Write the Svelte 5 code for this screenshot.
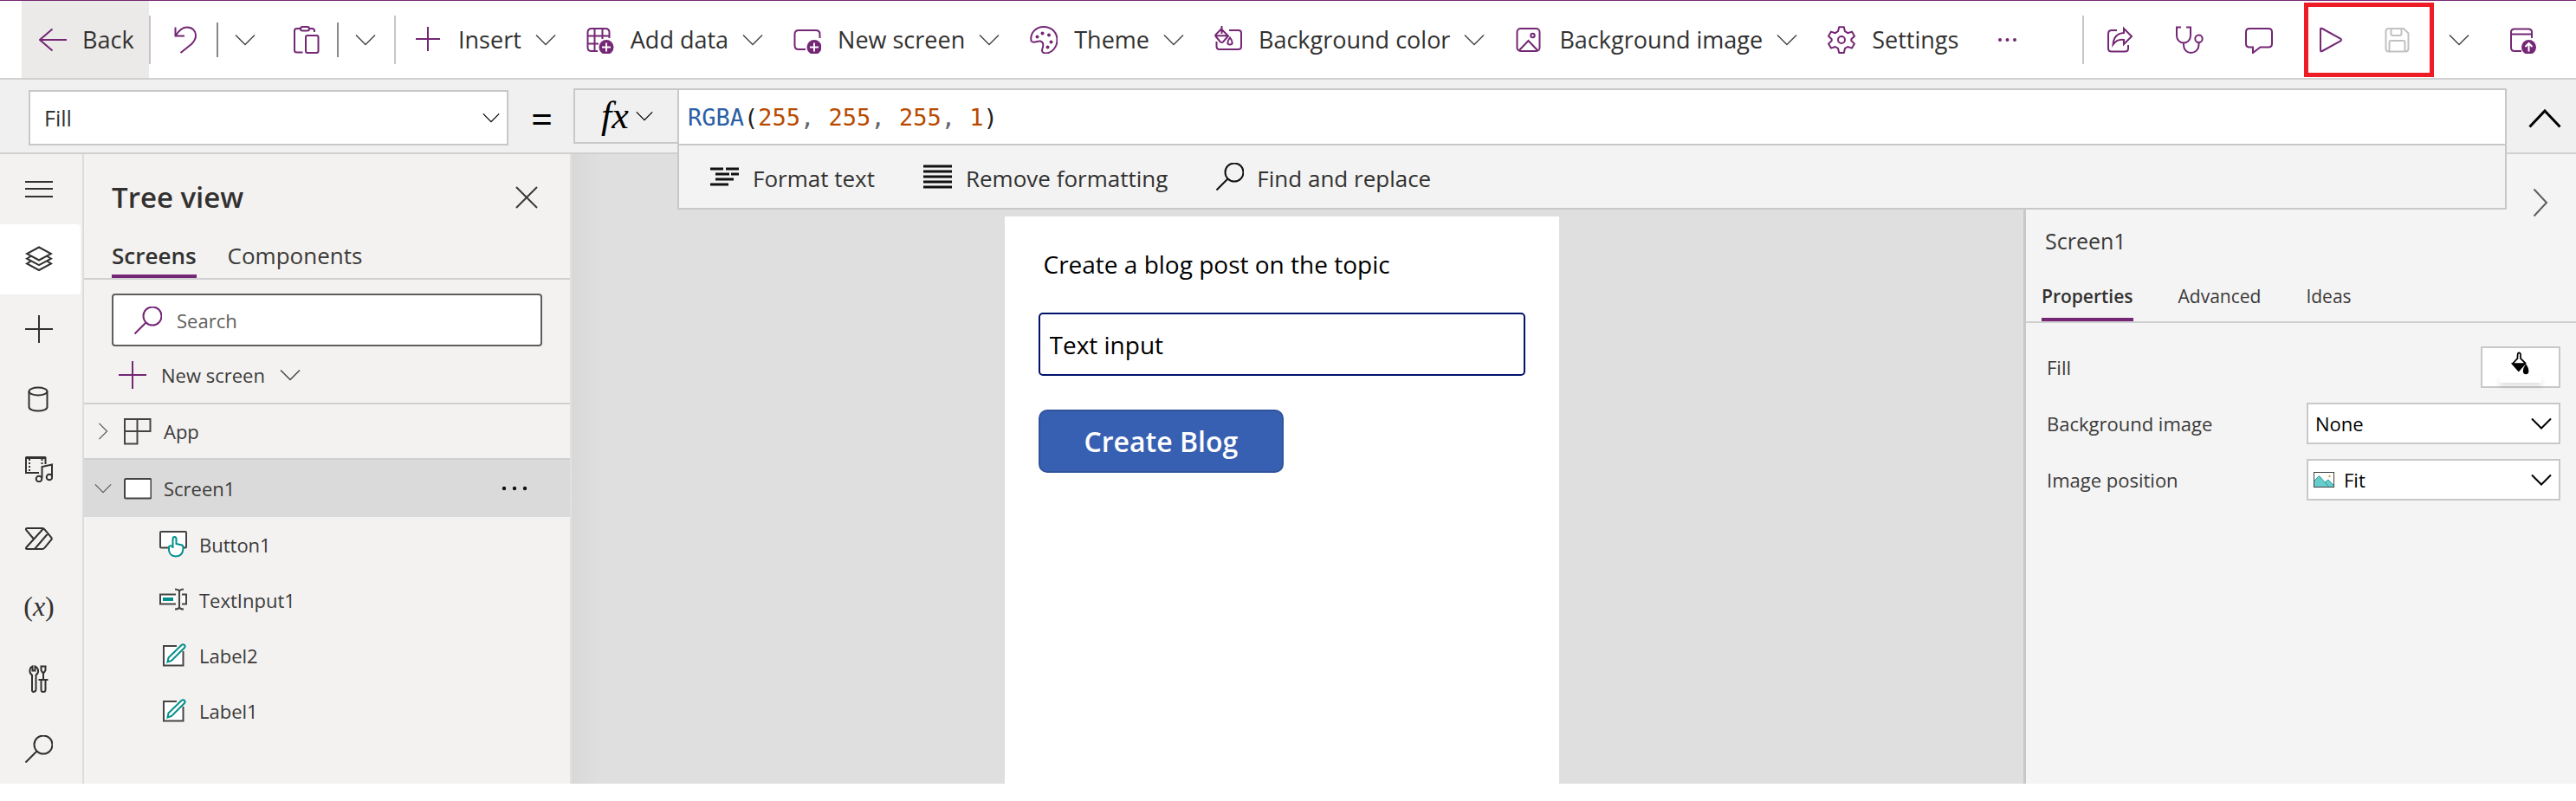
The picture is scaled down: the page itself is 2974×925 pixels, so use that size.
<script>
  const commands = [
    { icon: 'plus', label: 'Insert' },
    { icon: 'grid', label: 'Add data' },
    { icon: 'screen', label: 'New screen' },
    { icon: 'palette', label: 'Theme' },
    { icon: 'bucket', label: 'Background color' },
    { icon: 'image', label: 'Background image' }
  ];

  const rail = [
    { icon: 'menu', label: 'Menu' },
    { icon: 'layers', label: 'Tree view', active: true },
    { icon: 'railPlus', label: 'Insert' },
    { icon: 'data', label: 'Data' },
    { icon: 'media', label: 'Media' },
    { icon: 'flow', label: 'Power Automate' },
    { icon: 'variables', label: 'Variables' },
    { icon: 'tools', label: 'Advanced tools' },
    { icon: 'search', label: 'Search' }
  ];

  const children = [
    { icon: 'button', label: 'Button1' },
    { icon: 'textinput', label: 'TextInput1' },
    { icon: 'label', label: 'Label2' },
    { icon: 'label', label: 'Label1' }
  ];

  let property = $state('Fill');
  let backgroundImage = $state('None');
  let imagePosition = $state('Fit');
  let textValue = $state('Text input');
  let query = $state('');
</script>

{#snippet chevron()}
  <svg class="chev" width="24" height="14" viewBox="0 0 24 14" aria-hidden="true"><path d="M1 1.5L12 12.5L23 1.5" /></svg>
{/snippet}

{#snippet icon(name)}
  <svg class="icon" width="32" height="32" viewBox="0 0 32 32" aria-hidden="true">
    {#if name === 'back'}
      <path d="M32 16H1M15.500 3.500L1 16L15.500 28.500" />
    {:else if name === 'undo'}
      <path d="M3.500 1.500V11.500H14M4 11C7 6 11 1.500 17 1.500C23.500 1.500 27 6 27 11C27 15 25 18 22 21L9.500 31" />
    {:else if name === 'paste'}
      <path d="M11.500 30.500H4.500Q2 30.500 2 28V5.500Q2 3 4.500 3H9M19 3H22.500Q25 3 25 5.500V7" />
      <rect x="9" y="1" width="10" height="4.500" rx="2.200" />
      <rect x="15" y="11" width="14.500" height="20" rx="2" />
    {:else if name === 'plus'}
      <path d="M2 15H30M16 1V29" />
    {:else if name === 'grid'}
      <path d="M13 29H6Q1.500 29 1.500 25V7.500Q1.500 3 6 3H22Q26.500 3 26.500 7.500V14M1.500 11.500H26.500M1.500 20.500H14M9.500 3V29M18.500 3V15" />
      <circle class="solid" cx="23" cy="24.500" r="8.500" />
      <path class="white" d="M23 19.500V29.500M18 24.500H28" />
    {:else if name === 'screen'}
      <path d="M14 27H6Q1.500 27 1.500 22.500V9.500Q1.500 5 6 5H26Q30.500 5 30.500 9.500V14" />
      <circle class="solid" cx="24" cy="24.500" r="8.500" />
      <path class="white" d="M24 19.500V29.500M19 24.500H29" />
    {:else if name === 'palette'}
      <path d="M1.500 17C0 8 7 1 16 1C25 1 31.500 7.500 31.500 16C31.500 25 25 31.500 18 31.500C14 31.500 13.500 28.500 14.500 26C16 22 15.500 18 12 17.500C8 17 3 21 1.500 17Z" />
      <circle class="solid" cx="8.500" cy="12.500" r="2" /><circle class="solid" cx="14.500" cy="8.500" r="2" />
      <circle class="solid" cx="22" cy="10.500" r="2" /><circle class="solid" cx="24.500" cy="18.500" r="2" />
      <circle class="solid" cx="20.500" cy="24.500" r="2" />
    {:else if name === 'bucket'}
      <path d="M17 5H28Q31 5 31 8V23.500Q31 27 27.500 27H6Q2.500 27 2.500 23.500V18" />
      <path d="M8 3.500L16 11.500L10 18.500Q8.500 19.500 7 18.500L1.500 12Q1 11 1.500 10ZM1.500 11.200H15.500M8.500 0V9" />
      <path d="M18 13.500C14.500 18 14.500 21.500 18 21.500C21.500 21.500 21.500 18 18 13.500Z" />
    {:else if name === 'image'}
      <rect x="2.500" y="3" width="26" height="26" rx="4" />
      <path d="M5 28L15.500 17L26 28" />
      <circle cx="20.500" cy="11" r="2.200" />
    {:else if name === 'gear'}
      <path d="M13.200 1.200H18.800L20 6.200L23.200 8.200L28 6.600L31 11.700L27.300 15.300V17L31 20.600L28 25.600L23.200 24L20 25.900L18.800 31H13.200L12 25.900L8.800 24L4 25.600L1 20.600L4.700 17V15.300L1 11.700L4 6.600L8.800 8.200L12 6.200Z" stroke-linejoin="round" />
      <circle cx="16" cy="16" r="4" />
    {:else if name === 'dots'}
      <circle class="solid" cx="7" cy="16" r="2" /><circle class="solid" cx="15.500" cy="16" r="2" /><circle class="solid" cx="24" cy="16" r="2" />
    {:else if name === 'share'}
      <path d="M12 5H6Q2 5 2 9V26Q2 29.500 6 29.500H21Q25 29.500 25 26V22" />
      <path d="M20 3L29 12L20 21V16C14 15 10 18 7.500 21.500C8 14 12 8.500 20 8Z" />
    {:else if name === 'stetho'}
      <path d="M6 1.500H1V11C1 16 4.500 19.500 9 19.500C13.500 19.500 17 16 17 11V1.500H12M9 19.500V22C9 27 12.500 31 17.500 31C22.500 31 26.500 27 26.500 22V19" />
      <circle cx="26.500" cy="14.800" r="4.200" />
    {:else if name === 'comment'}
      <path d="M5 3H27Q31 3 31 7V20.500Q31 24.500 27 24.500H17.500L9 31V24.500H5Q1 24.500 1 20.500V7Q1 3 5 3Z" />
    {:else if name === 'play'}
      <path d="M7 4V28Q7 30 9 29L30 17.500Q32 16 30 14.500L9 3Q7 2 7 4Z" />
    {:else if name === 'save'}
      <path d="M5 3H23L28.500 8.500V26Q28.500 29.500 25 29.500H6Q2.500 29.500 2.500 26V6Q2.500 3 5.500 3ZM8.500 3V9Q8.500 11 10.500 11H18.500Q20.500 11 20.500 9V3M6.500 29.500V19Q6.500 17 8.500 17H22.500Q24.500 17 24.500 19V29.500" />
    {:else if name === 'publish'}
      <path d="M14 29H6Q2 29 2 25V7Q2 3.500 6 3.500H22Q26 3.500 26 7V14M2 9.500H26" />
      <circle class="solid" cx="22.500" cy="24.500" r="8.500" />
      <path class="white" d="M22.500 29.500V20M18.500 24L22.500 20L26.500 24" />
    {:else if name === 'menu'}
      <path d="M0 8H32M0 16H32M0 25H32" />
    {:else if name === 'layers'}
      <path d="M16 2.500L30 10L16 17.500L2 10ZM6.500 13L2 15.700L16 23.200L30 15.700L25.500 13M6.500 18.700L2 21.500L16 29L30 21.500L25.500 18.700" />
    {:else if name === 'railPlus'}
      <path d="M0 16H32M16 0V32" />
    {:else if name === 'data'}
      <ellipse cx="15" cy="7" rx="10.500" ry="4.500" />
      <path d="M4.500 7V25C4.500 31 25.500 31 25.500 25V7" />
    {:else if name === 'media'}
      <path d="M16 21H1V3.500H23.500V11" />
      <path d="M1 3.500H23.500" stroke-width="3" />
      <path d="M5 5V20M19.500 5V13" stroke-dasharray="2 2" />
      <path d="M19.500 27V14L31 11.500V26" />
      <circle cx="16" cy="28" r="3.300" /><circle cx="28" cy="26" r="3.300" />
    {:else if name === 'flow'}
      <path d="M2 4H20Q21.500 4 22.500 5.500L30.500 15Q31 16 30.500 17L22.500 26.500Q21.500 28 20 28H2.500Q0 28 1.500 26L21 4.500M2 4Q0 4.500 1.500 6.500L10 16.500M11 28L26 10.500" />
    {:else if name === 'tools'}
      <path d="M9 31Q12.500 31 12.500 28V11.500Q15.500 9.500 15 5.500Q14 2.500 11.500 1.500V6.500H8.500V1.500Q6 2.500 5.500 5.500Q5 9.500 8 11.500V28Q7.500 31 10 31ZM18.500 1.500H23.500V6L22 8.500H20L18.500 6ZM21 8.500V17M15.500 17H26.500M18.500 17V28.500Q18.500 31 21 31Q23.500 31 23.500 28.500V17" />
    {:else if name === 'search'}
      <circle cx="21" cy="11" r="10.500" /><path d="M13.500 18.500L0.500 31.500" />
    {:else if name === 'close'}
      <path d="M4 4L28 28M28 4L4 28" />
    {:else if name === 'app'}
      <path d="M1 2H30.500V16H1ZM15.500 2V30.500H1V16" />
    {:else if name === 'frame'}
      <rect class="paper" x="1" y="5" width="30.500" height="22.500" rx="1.500" />
    {:else if name === 'button'}
      <rect class="paper" x="1" y="1" width="30" height="18.500" rx="1" />
      <path class="teal paper" d="M15.500 18V9.500Q15.500 7 17.500 7Q19.500 7 19.500 9.500V15L26 16.500Q28 17.500 27.500 20Q27 29.500 19 29.500Q11.500 29 11 22V18.500Q11.500 16.500 15.500 18V20" />
    {:else if name === 'textinput'}
      <path class="paper" d="M19 9.500H1V20.500H19M26 9.500H31V20.500H26" />
      <rect class="tealfill" x="4" y="13" width="12" height="4" />
      <path d="M18 3.500Q22 3.500 23 5.500Q24 3.500 28 3.500M23 5V25M18 26.500Q22 26.500 23 24.500Q24 26.500 28 26.500" />
    {:else if name === 'label'}
      <path class="paper" d="M20 5H5V27.500H27.500V11" />
      <path class="teal paper" d="M9.500 23.500L10.500 18.500L25.500 4Q27.500 2.500 29 4Q30.500 5.500 28.500 7.500L14 22Z" />
    {/if}
  </svg>
{/snippet}

<div class="studio">
  <header class="commandbar">
    <button class="back">{@render icon('back')}<span>Back</span></button>
    <span class="rule tall"></span>
    <div class="history">
      <button aria-label="Undo">{@render icon('undo')}</button>
      <span class="rule dark"></span>
      <button aria-label="Undo options">{@render chevron()}</button>
    </div>
    <div class="history clip">
      <button aria-label="Paste">{@render icon('paste')}</button>
      <span class="rule dark"></span>
      <button aria-label="Paste options">{@render chevron()}</button>
    </div>
    <span class="rule tall"></span>
    <nav class="commands" aria-label="Commands">
      {#each commands as c}
        <button class="command">{@render icon(c.icon)}<span>{c.label}</span>{@render chevron()}</button>
      {/each}
      <button class="command last">{@render icon('gear')}<span>Settings</span></button>
      <button aria-label="More commands">{@render icon('dots')}</button>
    </nav>
    <div class="actions">
      <span class="rule tall"></span>
      <button aria-label="Share">{@render icon('share')}</button>
      <button aria-label="App checker">{@render icon('stetho')}</button>
      <button aria-label="Comments">{@render icon('comment')}</button>
      <div class="marked">
        <button aria-label="Preview the app">{@render icon('play')}</button>
        <button class="off" aria-label="Save" disabled>{@render icon('save')}</button>
      </div>
      <button class="saveopts" aria-label="Save options">{@render chevron()}</button>
      <button aria-label="Publish">{@render icon('publish')}</button>
    </div>
  </header>

  <section class="formulabar" aria-label="Formula bar">
    <div class="pick property">
      <select bind:value={property} aria-label="Property"><option>Fill</option></select>
      {@render chevron()}
    </div>
    <span class="equals">=</span>
    <button class="fx" aria-label="Functions"><span>fx</span>{@render chevron()}</button>
    <div class="editor">
      <div class="code" role="textbox" tabindex="0" contenteditable="true" aria-label="Formula"><span class="fn">RGBA</span>(<b>255</b><i>,</i> <b>255</b><i>,</i> <b>255</b><i>,</i> <b>1</b>)</div>
      <div class="formatting">
        <button>
          <svg width="34" height="24" viewBox="0 0 34 24" aria-hidden="true"><path d="M0 3H15M18 3H33M6 9H22M24 9H33M6 15H27M0 21H21" /></svg>
          <span>Format text</span>
        </button>
        <button>
          <svg width="34" height="30" viewBox="0 0 34 30" aria-hidden="true"><path d="M0 3H33M0 9H33M0 15H33M0 21H33M0 27H33" /></svg>
          <span>Remove formatting</span>
        </button>
        <button>{@render icon('search')}<span>Find and replace</span></button>
      </div>
    </div>
    <button class="collapse" aria-label="Collapse formula bar">
      <svg width="38" height="22" viewBox="0 0 38 22" aria-hidden="true"><path d="M1.500 20.500L19 2L36.500 20.500" /></svg>
    </button>
  </section>

  <main class="workspace">
    <nav class="rail" aria-label="Authoring">
      {#each rail as r}
        <button class:active={r.active} aria-label={r.label}>
          {#if r.icon === 'variables'}<span class="vars">(<em>x</em>)</span>{:else}{@render icon(r.icon)}{/if}
        </button>
      {/each}
    </nav>

    <aside class="tree">
      <div class="treehead">
        <h1>Tree view</h1>
        <button aria-label="Close">{@render icon('close')}</button>
      </div>
      <div class="tabs treetabs">
        <button class="current">Screens</button>
        <button>Components</button>
      </div>
      <label class="search">
        {@render icon('search')}
        <input type="text" placeholder="Search" aria-label="Search" bind:value={query} />
      </label>
      <button class="newscreen">{@render icon('railPlus')}<span>New screen</span>{@render chevron()}</button>
      <ul>
        <li class="row"><span class="twist closed">{@render chevron()}</span>{@render icon('app')}<span>App</span></li>
        <li class="row selected">
          <span class="twist">{@render chevron()}</span>{@render icon('frame')}<span>Screen1</span>
          <button class="more" aria-label="More options">
            <svg width="30" height="6" viewBox="0 0 30 6" aria-hidden="true"><circle cx="3" cy="3" r="2.200" /><circle cx="15" cy="3" r="2.200" /><circle cx="27" cy="3" r="2.200" /></svg>
          </button>
        </li>
        {#each children as c}
          <li class="row child">{@render icon(c.icon)}<span>{c.label}</span></li>
        {/each}
      </ul>
    </aside>

    <section class="canvas" aria-label="Canvas">
      <div class="phone">
        <label for="topic">Create a blog post on the topic</label>
        <input id="topic" type="text" bind:value={textValue} />
        <button>Create Blog</button>
      </div>
    </section>

    <aside class="props">
      <div class="propshead">
        <h2>Screen1</h2>
        <button aria-label="Collapse panel">
          <svg width="18" height="34" viewBox="0 0 18 34" aria-hidden="true"><path d="M1.500 1.500L16 17L1.500 32.500" /></svg>
        </button>
      </div>
      <div class="tabs proptabs">
        <button class="current">Properties</button>
        <button>Advanced</button>
        <button>Ideas</button>
      </div>
      <div class="fields">
        <div class="field">
          <span id="fill-label">Fill</span>
          <button class="swatch" aria-labelledby="fill-label">
            <svg width="24" height="32" viewBox="0 0 24 32" aria-hidden="true">
              <path d="M9.500 1.500Q12.500 1.500 12 6V9L18 15L9.500 25L1.500 16L8 9V5Q8 2 9.500 1.500Z" />
              <path class="ink" d="M1.500 16H17.500L9.500 25ZM19 18C15 24 15.500 29 19 29C22.500 29 23 24 19 18Z" />
            </svg>
            <span class="sample"></span>
          </button>
        </div>
        <div class="field">
          <label for="bgimage">Background image</label>
          <div class="pick">
            <select id="bgimage" bind:value={backgroundImage}><option>None</option></select>
            {@render chevron()}
          </div>
        </div>
        <div class="field">
          <label for="imgpos">Image position</label>
          <div class="pick pictured">
            <svg class="pic" width="24" height="18" viewBox="0 0 24 18" aria-hidden="true">
              <rect x="1" y="1" width="22" height="16" fill="#fff" stroke="none" />
              <path d="M1 10L6.500 4.500L13 12L17 9L23 15V17H1Z" fill="#66cccc" stroke="none" />
              <path d="M1 10L6.500 4.500L17 16.500M13 12L17 9L23 15" stroke="#2a9c98" stroke-width="1" />
              <circle cx="18.500" cy="5" r="1.200" fill="#e8a33d" stroke="none" />
              <rect x="0.500" y="0.500" width="23" height="17" stroke="#444" stroke-width="1" />
            </svg>
            <select id="imgpos" bind:value={imagePosition}><option>Fit</option></select>
            {@render chevron()}
          </div>
        </div>
      </div>
    </aside>
  </main>
</div>

<style>
  :global(body) { margin: 0; background: #fff; }
  * { box-sizing: border-box; }
  button, input, select { font: inherit; color: inherit; border: 0; background: none; padding: 0; margin: 0; border-radius: 0; outline: none; }
  button { display: flex; align-items: center; white-space: nowrap; }
  svg { display: block; flex: none; fill: none; stroke: currentColor; stroke-width: 2; }
  h1, h2, ul { margin: 0; padding: 0; list-style: none; font-weight: 400; }

  .studio {
    display: flex; flex-direction: column; min-height: 100vh; padding-bottom: 20px;
    font-family: "Open Sans", "Noto Sans", sans-serif; font-size: 22px; line-height: 32px; color: #323130;
  }
  .chev { stroke-width: 1.500; color: #484644; }
  .solid { fill: currentColor; stroke: none; }
  .white { stroke: #fff; }
  .paper { fill: #fff; }
  .teal { stroke: #008f8c; }
  .tealfill { fill: #008f8c; stroke: none; }

  .commandbar {
    display: flex; align-items: center; height: 92px; padding-left: 25px;
    border-top: 1px solid #742774; border-bottom: 2px solid #d0d0d0; background: #fff; font-size: 27px;
  }
  .commandbar .icon { color: #742774; }
  .back { align-self: stretch; gap: 18px; width: 147px; padding-left: 20px; background: #ebeae8; }
  .rule { flex: none; width: 2px; height: 40px; background: #c8c6c4; }
  .rule.tall { height: 56px; }
  .rule.dark { background: #8a8886; }
  .history { display: flex; align-items: center; gap: 19px; padding-left: 25px; }
  .clip { padding-left: 43px; padding-right: 21px; }
  .commands { display: flex; align-items: center; gap: 35px; padding-left: 21px; }
  .command span { padding: 0 16px 0 19px; }
  .command.last span { padding-right: 6px; }
  .actions { display: flex; align-items: center; gap: 48px; margin-left: auto; padding-right: 45px; }
  .actions > .rule { margin-right: -22px; }
  .marked { position: relative; display: flex; gap: 48px; }
  .marked::after { content: ""; position: absolute; inset: -27px -26px -27px -12px; border: 5px solid #ee1c24; pointer-events: none; }
  .commandbar .off .icon { color: #c1c1c1; }
  .saveopts { margin: 0 -2px 0 -5px; }

  .formulabar { display: flex; align-items: flex-start; height: 86px; padding: 10px 0 0 33px; background: #f0f0f0; border-bottom: 2px solid #d0d0d0; }
  .pick { position: relative; display: flex; align-items: center; height: 48px; background: #fff; border: 2px solid #c8c8c8; color: #000; }
  .pick select { appearance: none; width: 100%; height: 100%; padding: 0 48px 0 8px; }
  .pick .chev { position: absolute; right: 8px; pointer-events: none; color: #000; stroke-width: 2; }
  .property { width: 554px; height: 64px; margin-top: 2px; font-size: 25px; }
  .property select { padding-left: 16px; color: #323130; }
  .property .chev { width: 20px; stroke-width: 1.500; }
  .equals { width: 75px; padding-left: 2px; text-align: center; font-size: 44px; line-height: 70px; color: #000; }
  .fx { width: 120px; height: 64px; padding-left: 30px; gap: 8px; border: 2px solid #c8c8c8; border-right: 0; color: #000; }
  .fx span { font: italic 44px/56px "Liberation Serif", serif; }
  .fx .chev { width: 20px; color: #000; }
  .editor { position: relative; z-index: 2; flex: 1; min-width: 0; }
  .code { height: 66px; padding: 0 10px; border: 2px solid #c8c8c8; border-bottom-width: 1px; background: #fff; font: 27px/64px "DejaVu Sans Mono", monospace; color: #222; white-space: pre; outline: none; }
  .code b { font-weight: 400; color: #b84a00; }
  .code i { font-style: normal; color: #62626c; }
  .fn { color: #2b5fa5; }
  .formatting { position: absolute; top: 64px; left: 0; right: 0; display: flex; gap: 56px; height: 76px; padding-left: 36px; background: #f3f3f3; border: 2px solid #c8c8c8; font-size: 26px; }
  .formatting button { gap: 15px; }
  .formatting button span { padding-top: 4px; }
  .formatting svg { color: #111; stroke-width: 3; }
  .formatting .icon { stroke-width: 2; }
  .collapse { width: 80px; height: 70px; justify-content: center; padding-left: 8px; color: #000; }
  .collapse svg { stroke-width: 3; }

  .workspace { flex: 1; display: grid; grid-template-columns: 97px 563px minmax(0, 1fr) 638px; }

  .rail { display: grid; grid-auto-rows: 1fr; padding-right: 2px; background: #f3f2f1; border-right: 2px solid #dcdcdc; }
  .rail button { justify-content: center; padding-right: 3px; }
  .rail .active { background: #fff; border-radius: 0 4px 4px 0; }
  .vars { padding-bottom: 6px; font: 32px/32px "Liberation Serif", serif; }

  .tree { display: flex; flex-direction: column; background: #f3f2f1; border-right: 2px solid #e0e0e0; color: #3b3a39; }
  .tree > * { flex: none; }
  .treehead { display: flex; align-items: center; justify-content: space-between; height: 95px; padding: 4px 34px 0 32px; }
  h1 { font-size: 33px; line-height: 48px; font-weight: 600; color: #323130; }
  .tabs { display: flex; border-bottom: 2px solid #d0d0d0; }
  .tabs button { height: 48px; border-bottom: 4px solid transparent; }
  .tabs .current { font-weight: 600; border-color: #742774; color: #323130; }
  .treetabs { gap: 36px; padding-left: 32px; font-size: 26px; }
  .search { display: flex; align-items: center; gap: 17px; height: 61px; margin: 16px 32px 0; padding-left: 24px; border: 2px solid #605e5c; border-radius: 4px; background: #fff; color: #742774; }
  .search input { flex: 1; min-width: 0; height: 100%; color: #323130; }
  .search input::placeholder { color: #605e5c; opacity: 1; }
  .newscreen { height: 67px; padding-left: 40px; gap: 17px; border-bottom: 2px solid #d0d0d0; }
  .newscreen .icon { color: #742774; }
  .row { display: flex; align-items: center; gap: 14px; height: 64px; }
  .row:first-child { border-bottom: 2px solid #d0d0d0; }
  .selected { height: 66px; background: #dadada; }
  .twist { display: flex; justify-content: center; width: 32px; margin-right: -14px; padding-left: 12px; }
  .twist .chev { width: 20px; color: #605e5c; }
  .closed .chev { transform: rotate(-90deg); }
  .row .icon { margin-left: 14px; color: #444; }
  .child { padding-left: 73px; }
  .more { margin-left: auto; padding-right: 49px; }
  .more svg { fill: #111; stroke: none; }

  .canvas { display: flex; justify-content: center; padding: 72px 37px 0 0; background: linear-gradient(to right, #d8d8d8, #dfdfdf 32px); }
  .phone { width: 640px; padding: 33px 39px; background: #fff; color: #000; font-size: 28px; }
  .phone label { display: block; padding-left: 6px; line-height: 44px; }
  .phone input { width: 100%; height: 73px; margin-top: 34px; padding: 0 11px; border: 2px solid #00126b; border-radius: 5px; }
  .phone button { height: 73px; margin-top: 39px; padding: 0 51px; border: 2px solid #2f549c; border-radius: 10px; background: #3860b2; color: #fff; font-size: 32px; font-weight: 600; }

  .props { background: #f4f4f4; border-left: 3px solid #c8c8c8; color: #3b3a39; }
  .propshead { display: flex; justify-content: space-between; height: 145px; padding: 39px 32px 0 22px; color: #605e5c; }
  .propshead button { align-items: flex-start; align-self: flex-start; }
  h2 { padding-top: 43px; font-size: 25px; line-height: 36px; color: #3b3a39; }
  .proptabs { gap: 52px; padding-left: 18px; font-size: 21px; }
  .proptabs button { padding-bottom: 6px; }
  .fields { display: grid; gap: 17px; padding: 27px 18px 0 24px; }
  .field { display: flex; align-items: center; justify-content: space-between; }
  .field .pick { width: 293px; }
  .pictured select { padding-left: 41px; }
  .pic { position: absolute; left: 6px; pointer-events: none; }
  .swatch { flex-direction: column; width: 92px; height: 48px; padding-top: 4px; border: 2px solid #c8c8c8; background: #fff; color: #000; }
  .swatch svg { height: 28px; }
  .ink { fill: currentColor; }
  .sample { width: 48px; height: 8px; background: #fff; box-shadow: 0 4px 6px #00000022; }
</style>
